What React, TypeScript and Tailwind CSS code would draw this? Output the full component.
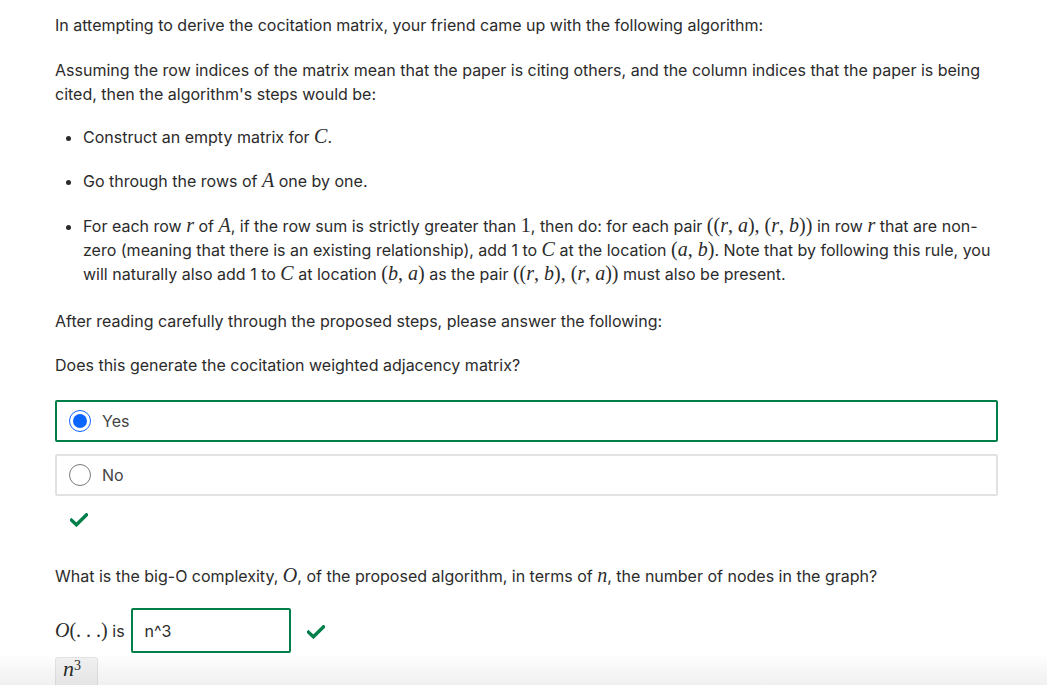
import React from 'react';

// inline math, set in a serif italic like KaTeX
function M({ children }: { children: React.ReactNode }) {
  return <span className="font-['Liberation_Serif',serif] italic text-[1.25em] leading-[0]">{children}</span>;
}

function R({ children }: { children: React.ReactNode }) {
  return <span className="font-['Liberation_Serif',serif] text-[1.25em] leading-[0]">{children}</span>;
}

function Check() {
  return (
    <svg width="18" height="14" viewBox="0 0 18 14" className="text-[#007f4b]">
      <path d="M1.5 7.2 L6.4 11.8 L16.5 1.8" fill="none" stroke="currentColor" strokeWidth="3.4" strokeLinecap="square" />
    </svg>
  );
}

function Radio({ checked }: { checked: boolean }) {
  if (checked) {
    return (
      <span className="w-[22px] h-[22px] rounded-full border-[1.5px] border-[#0a66ff] flex items-center justify-center bg-white">
        <span className="w-[14px] h-[14px] rounded-full bg-[#0a66ff]" />
      </span>
    );
  }
  return <span className="w-[22px] h-[22px] rounded-full border-[1.5px] border-[#7a7a7a] bg-white" />;
}

export default function App() {
  return (
    <div className="relative h-[685px] overflow-hidden bg-white text-[#2b2b2b] font-['Inter',sans-serif] text-[16px] leading-6">
      <div className="pl-[55px] pt-[13px] w-[1000px]">
        <p>In attempting to derive the cocitation matrix, your friend came up with the following algorithm:</p>

        <p className="mt-[21px]">
          Assuming the row indices of the matrix mean that the paper is citing others, and the column indices that the paper is being cited, then the algorithm's steps would be:
        </p>

        <ul className="list-disc pl-[28px] mt-[19px]">
          <li>
            Construct an empty matrix for <M>C</M>.
          </li>
          <li className="mt-5">
            Go through the rows of <M>A</M> one by one.
          </li>
          <li className="mt-[21px]">
            For each row <M>r</M> of <M>A</M>, if the row sum is strictly greater than <R>1</R>, then do: for each pair{' '}
            <R>((</R><M>r</M><R>, </R><M>a</M><R>), (</R><M>r</M><R>, </R><M>b</M><R>))</R> in row <M>r</M> that are non-zero (meaning that there is an existing relationship), add 1 to <M>C</M> at the location{' '}
            <R>(</R><M>a</M><R>, </R><M>b</M><R>)</R>. Note that by following this rule, you will naturally also add 1 to <M>C</M> at location{' '}
            <R>(</R><M>b</M><R>, </R><M>a</M><R>)</R> as the pair <R>((</R><M>r</M><R>, </R><M>b</M><R>), (</R><M>r</M><R>, </R><M>a</M><R>))</R> must also be present.
          </li>
        </ul>

        <p className="mt-[23px]">After reading carefully through the proposed steps, please answer the following:</p>
        <p className="mt-5">Does this generate the cocitation weighted adjacency matrix?</p>

        <div className="mt-[23px] w-[943px] flex flex-col gap-3">
          <div className="h-[42px] border-2 border-[#007f4b] rounded-[2px] flex items-center pl-[12px] gap-[11px] text-[#444]">
            <Radio checked />
            <span>Yes</span>
          </div>
          <div className="h-[42px] border-2 border-[#e2e2e2] rounded-[2px] flex items-center pl-[12px] gap-[11px] text-[#444]">
            <Radio checked={false} />
            <span>No</span>
          </div>
        </div>

        <div className="mt-[17px] pl-[15px]">
          <Check />
        </div>

        <p className="mt-[37px]">
          What is the big-O complexity, <M>O</M>, of the proposed algorithm, in terms of <M>n</M>, the number of nodes in the graph?
        </p>

        <div className="mt-[20px] flex items-center">
          <span>
            <M>O</M>
            <R>(. . .)</R> is
          </span>
          <div className="ml-[6px] w-[160px] h-[45px] border-2 border-[#007f4b] rounded-[2px] flex items-center pl-[12px] text-[#2b2b2b]">
            n^3
          </div>
          <div className="ml-4 mt-[2px]">
            <Check />
          </div>
        </div>

        <div className="mt-[4px] w-[43px] h-[40px] bg-[#f2f2f2] border border-[#e3e3e3] rounded-t-[3px] pl-[7px] pt-0">
          <span className="font-['Liberation_Serif',serif] italic text-[22px] leading-none">n</span>
          <sup className="font-['Liberation_Serif',serif] text-[14px] relative -top-[6px]">3</sup>
        </div>
      </div>

      <div className="absolute left-0 right-0 bottom-0 h-[32px] bg-gradient-to-b from-[rgba(0,0,0,0)] to-[rgba(0,0,0,0.06)] pointer-events-none" />
    </div>
  );
}
